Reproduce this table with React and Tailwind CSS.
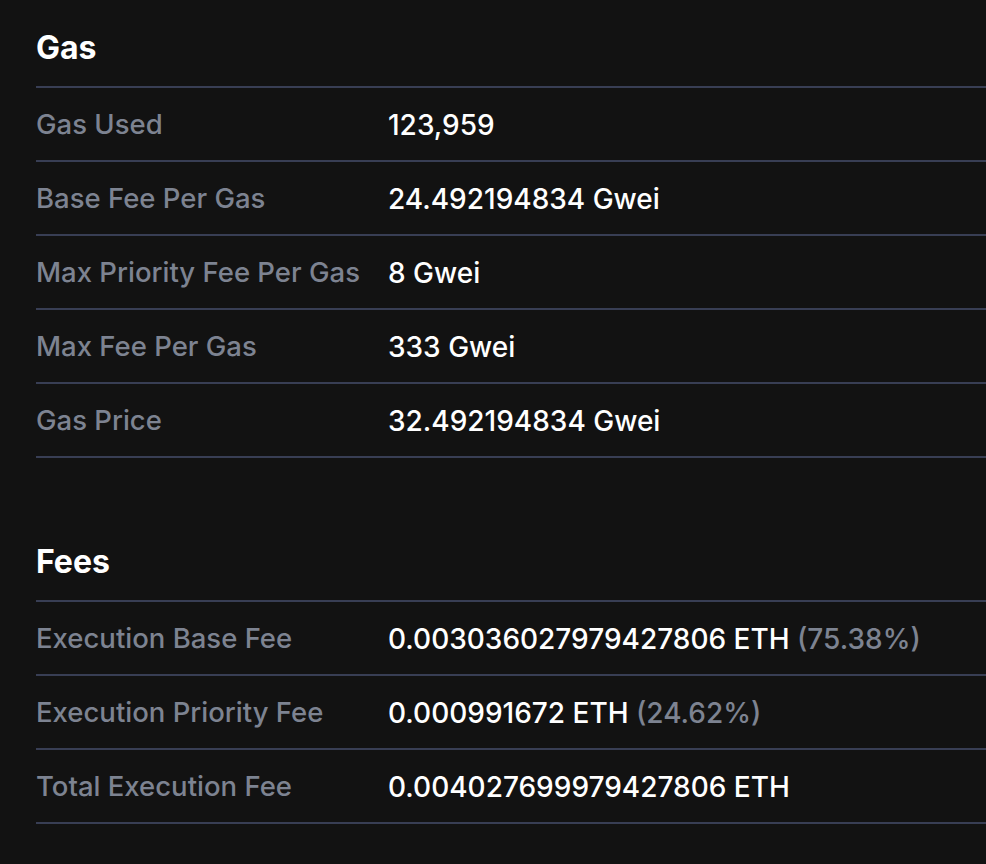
import React from "react";

const gasRows = [
  { label: "Gas Used", value: "123,959" },
  { label: "Base Fee Per Gas", value: "24.492194834 Gwei" },
  { label: "Max Priority Fee Per Gas", value: "8 Gwei" },
  { label: "Max Fee Per Gas", value: "333 Gwei" },
  { label: "Gas Price", value: "32.492194834 Gwei" },
];

const feeRows = [
  { label: "Execution Base Fee", value: "0.003036027979427806 ETH", pct: "(75.38%)" },
  { label: "Execution Priority Fee", value: "0.000991672 ETH", pct: "(24.62%)" },
  { label: "Total Execution Fee", value: "0.004027699979427806 ETH" },
];

const Section = ({ title, rows }) => (
  <section>
    <h2 className="text-[32px] leading-[40px] font-bold text-white mb-[18px]">{title}</h2>
    <div className="border-b-2 border-[#383e54]">
      {rows.map((row) => (
        <div
          key={row.label}
          className="flex items-center h-[74px] pt-[2px] border-t-2 border-[#383e54] font-medium"
        >
          <div className="w-[352px] shrink-0 text-[27.5px] text-[#7d8391]">{row.label}</div>
          <div className="text-[28px] text-white whitespace-nowrap">
            {row.value}
            {row.pct && <span className="text-[#7d8391]"> {row.pct}</span>}
          </div>
        </div>
      ))}
    </div>
  </section>
);

export default function App() {
  return (
    <div
      className="min-h-screen bg-[#121212] pl-9 pt-[28px] flex flex-col gap-[84px]"
      style={{ fontFamily: "Inter, 'Noto Sans', sans-serif" }}
    >
      <Section title="Gas" rows={gasRows} />
      <Section title="Fees" rows={feeRows} />
    </div>
  );
}
